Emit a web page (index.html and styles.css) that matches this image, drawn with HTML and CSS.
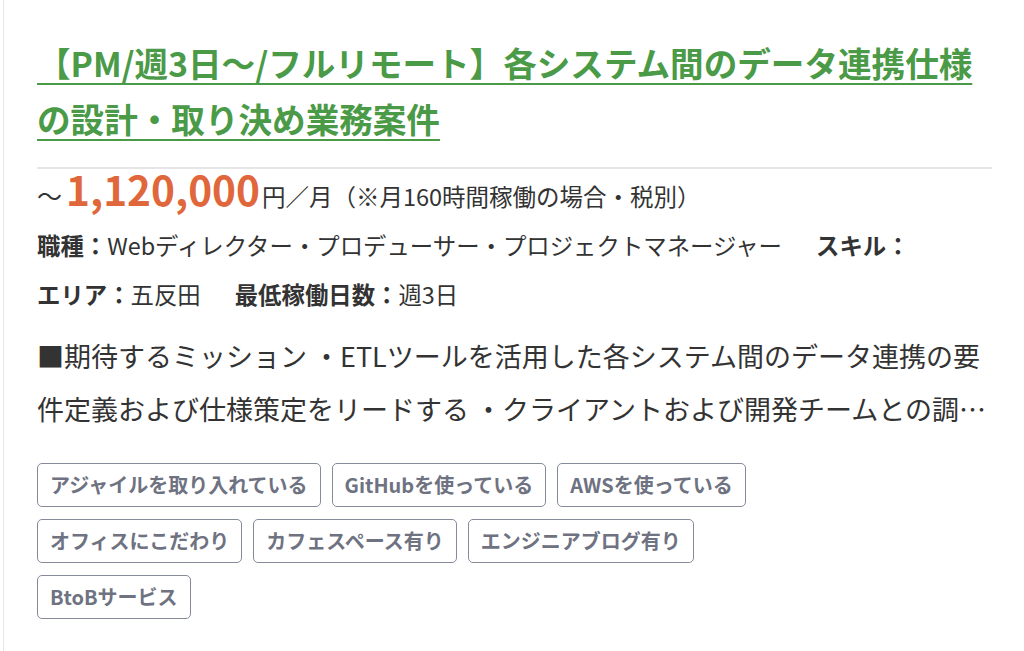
FILE: index.html
```html
<!DOCTYPE html>
<html lang="ja">
<head>
<meta charset="utf-8">
<link rel="stylesheet" href="styles.css">
</head>
<body>
<div class="card">
  <div class="head">
    <h2 class="title"><a href="#">【PM/週3日〜/フルリモート】各システム間のデータ連携仕様の設計・取り決め業務案件</a></h2>
  </div>
  <div class="price"><span class="tilde">～</span><span class="amount">1,120,000</span><span class="unit">円／月（※月160時間稼働の場合・税別）</span></div>
  <div class="info">
    <span class="item"><b>職種：</b>Webディレクター・プロデューサー・プロジェクトマネージャー</span><span class="item"><b>スキル：</b></span>
  </div>
  <div class="info">
    <span class="item"><b>エリア：</b>五反田</span><span class="item"><b>最低稼働日数：</b>週3日</span>
  </div>
  <p class="desc">■期待するミッション ・ETLツールを活用した各システム間のデータ連携の要件定義および仕様策定をリードする ・クライアントおよび開発チームとの調整を行い、仕様を取り決める</p>
  <ul class="tags">
    <li class="tag">アジャイルを取り入れている</li>
    <li class="tag">GitHubを使っている</li>
    <li class="tag">AWSを使っている</li>
    <li class="tag">オフィスにこだわり</li>
    <li class="tag">カフェスペース有り</li>
    <li class="tag">エンジニアブログ有り</li>
    <li class="tag">BtoBサービス</li>
  </ul>
</div>
</body>
</html>
```

FILE: styles.css
```css
html, body {
  margin: 0;
  padding: 0;
  background: #ffffff;
}
body {
  font-family: "Noto Sans CJK JP", "Noto Sans", sans-serif;
  color: #333333;
}
.card {
  margin-left: 3px;
  border-left: 1px solid #e8e8e8;
  min-height: 651px;
  box-sizing: border-box;
  padding: 35px 32px 0 33px;
}
.head {
  border-bottom: 2px solid #e6e6e6;
  padding-bottom: 20px;
}
.title {
  margin: 0;
  font-size: 33.6px;
  line-height: 56px;
  font-weight: 700;
}
.title a {
  color: #4a9a47;
  text-decoration: underline;
  text-decoration-thickness: 2px;
  text-underline-offset: 6px;
}
.price {
  height: 52px;
  line-height: 52px;
  white-space: nowrap;
}
.price span {
  line-height: 1;
}
.tilde {
  font-size: 25px;
  margin-right: 4px;
}
.amount {
  font-size: 40.6px;
  font-weight: 700;
  color: #e0673b;
  margin-right: 2px;
}
.unit {
  font-size: 23.5px;
}
.info {
  font-size: 23.4px;
  line-height: 49px;
  white-space: nowrap;
}
.item {
  margin-right: 34px;
}
.item b {
  font-weight: 700;
}
.desc {
  margin: 10px 0 0;
  font-size: 27px;
  line-height: 53px;
  display: -webkit-box;
  -webkit-line-clamp: 2;
  -webkit-box-orient: vertical;
  overflow: hidden;
}
.tags {
  list-style: none;
  margin: 28px 0 0;
  padding: 0;
  max-width: 760px;
  display: flex;
  flex-wrap: wrap;
  gap: 12px 11px;
}
.tag {
  font-size: 20px;
  font-weight: 700;
  color: #6e7281;
  border: 1px solid #868b99;
  border-radius: 5px;
  padding: 0 12px;
  line-height: 42px;
}
```
